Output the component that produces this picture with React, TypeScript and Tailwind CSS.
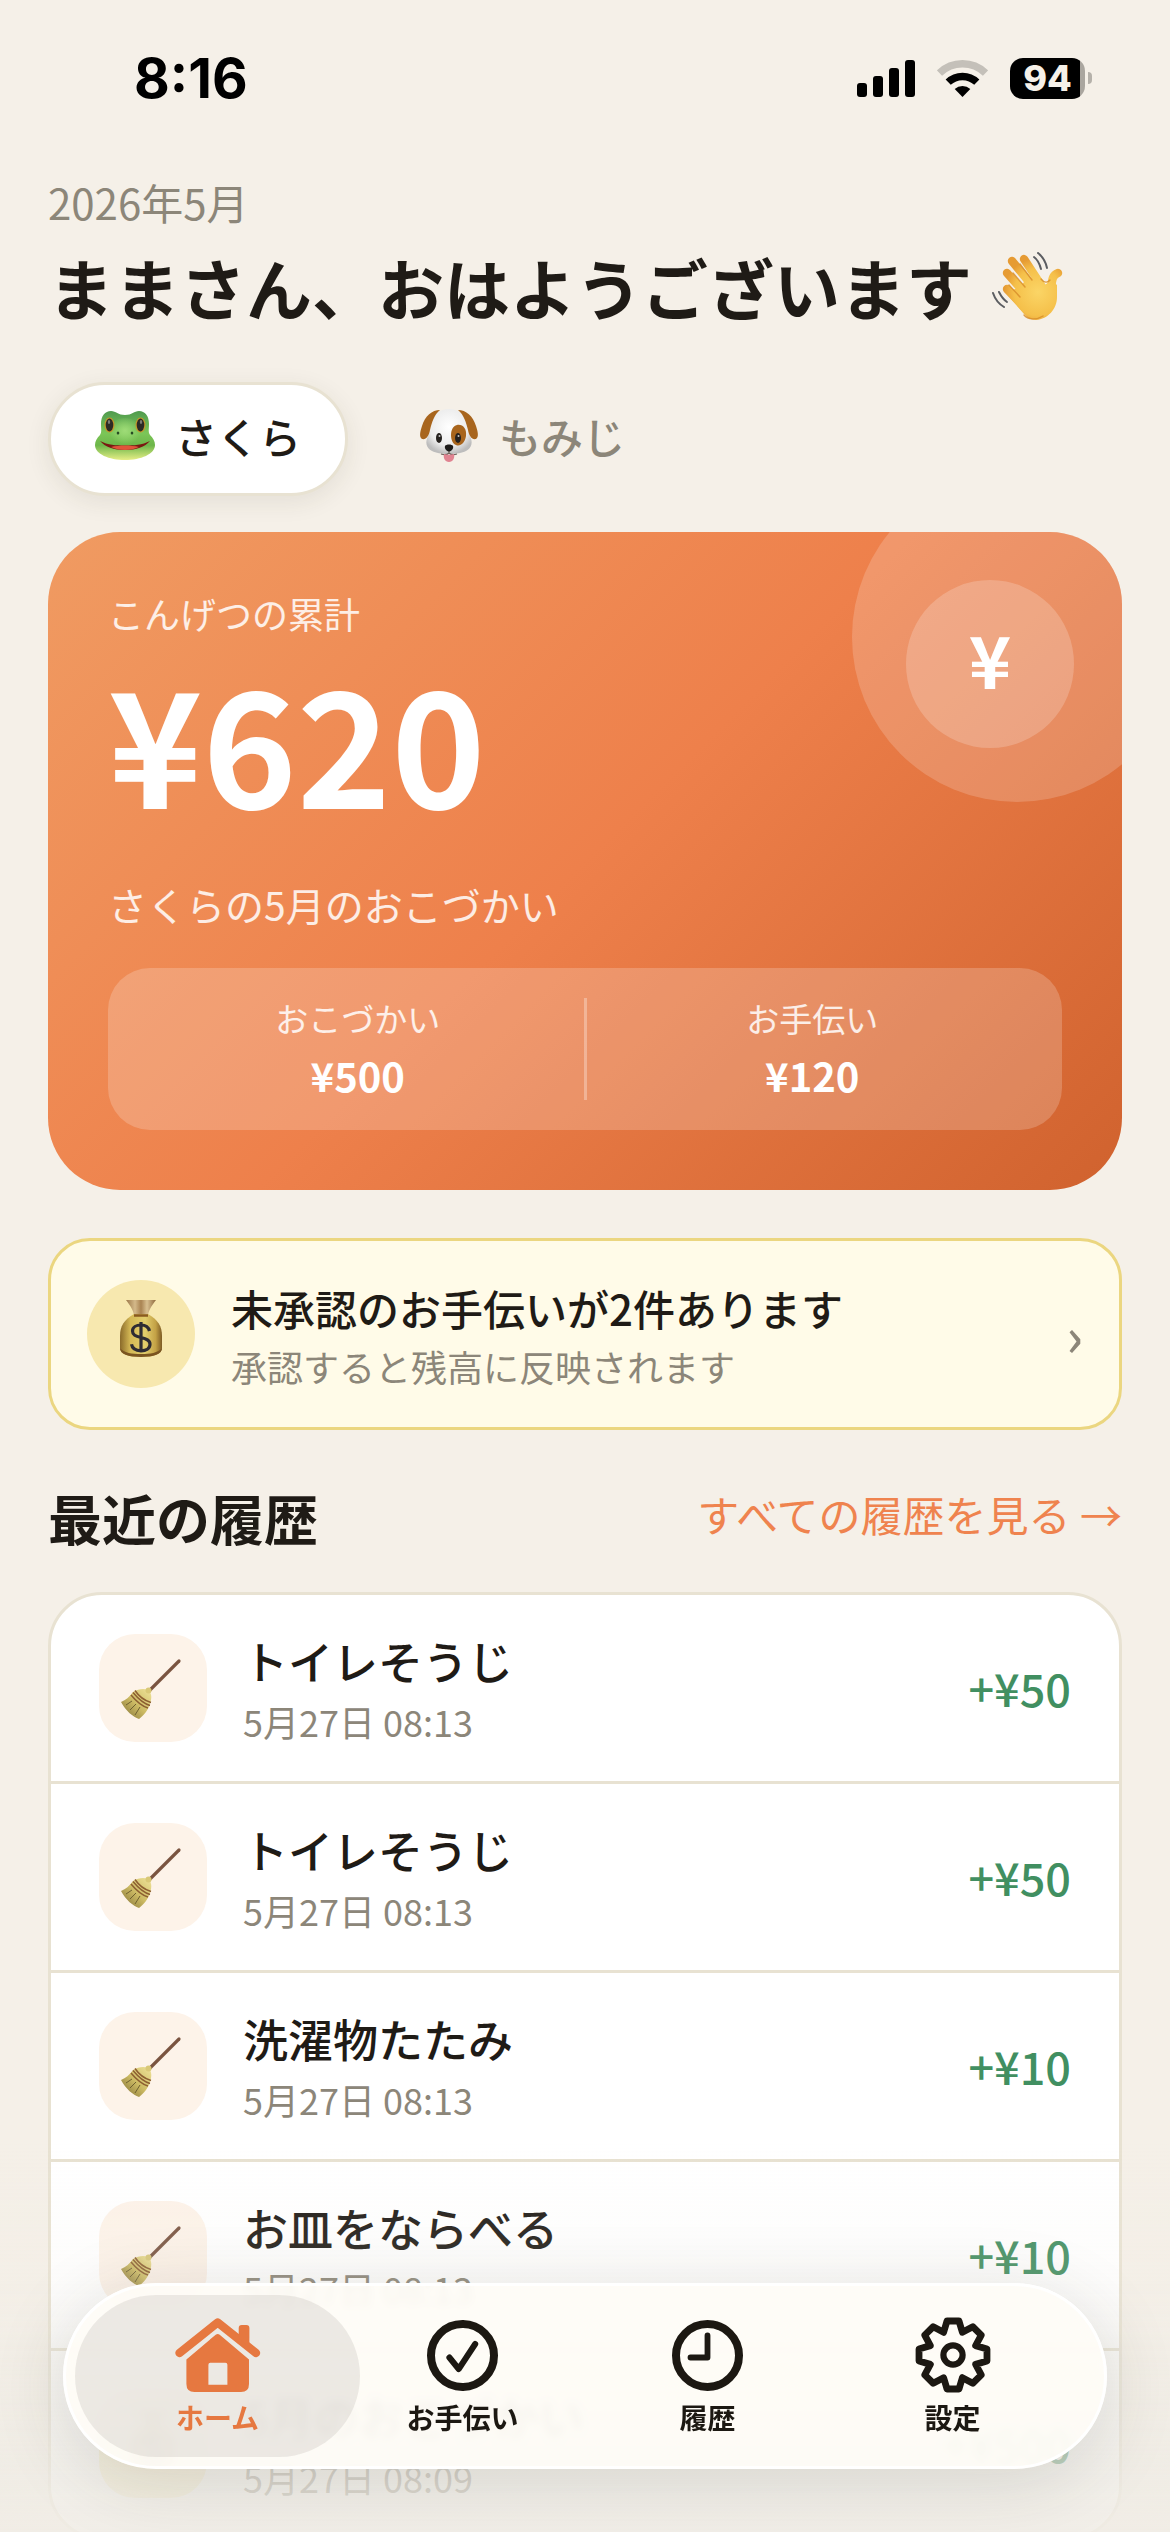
import { useState } from "react";
import type { ReactNode } from "react";

function FrogIcon() {
  return (
    <svg viewBox="0 0 60 50" className="h-[50px] w-[60px]" aria-hidden="true">
      <defs>
        <linearGradient id="frogSkin" x1="0" y1="0" x2="0" y2="1">
          <stop offset="0" stopColor="#4f9a4e" />
          <stop offset="0.45" stopColor="#7cc658" />
          <stop offset="0.7" stopColor="#6db64a" />
          <stop offset="1" stopColor="#e6ee86" />
        </linearGradient>
        <radialGradient id="frogFace" cx="0.5" cy="0.45" r="0.5">
          <stop offset="0" stopColor="#9fdc78" />
          <stop offset="1" stopColor="#9fdc78" stopOpacity="0" />
        </radialGradient>
      </defs>
      <path
        d="M6 14C6 6 10 1 16 1c5 0 7 4 14 4s9-4 14-4c6 0 10 5 10 13 0 5-1 8 1 11 3 3 5 6 5 10 0 9-14 15-30 15S0 44 0 35c0-4 2-7 5-10 2-3 1-6 1-11z"
        fill="url(#frogSkin)"
      />
      <ellipse cx="30" cy="22" rx="16" ry="14" fill="url(#frogFace)" />
      <ellipse cx="14.500" cy="15" rx="5" ry="7.500" fill="#c9992a" />
      <ellipse cx="45.500" cy="15" rx="5" ry="7.500" fill="#c9992a" />
      <ellipse cx="14.500" cy="15" rx="3.800" ry="6.500" fill="#2c2b26" />
      <ellipse cx="45.500" cy="15" rx="3.800" ry="6.500" fill="#2c2b26" />
      <ellipse cx="14" cy="12" rx="1.200" ry="2" fill="#7b7b74" />
      <ellipse cx="46" cy="12" rx="1.200" ry="2" fill="#7b7b74" />
      <ellipse cx="23" cy="23" rx="1.300" ry="1.500" fill="#274a24" />
      <ellipse cx="37" cy="23" rx="1.300" ry="1.500" fill="#274a24" />
      <path d="M5 31c8 4 16 4.500 25 4.500S47 35 55 31c-5 6-14 9-25 9S10 37 5 31z" fill="#7a1712" />
      <path d="M16 37c8-2 20-2 28 0-8 4-20 4-28 0z" fill="#e0543a" />
    </svg>
  );
}

function DogIcon() {
  return (
    <svg viewBox="0 0 60 54" className="h-[54px] w-[60px]" aria-hidden="true">
      <defs>
        <radialGradient id="dogFur" cx="0.5" cy="0.4" r="0.6">
          <stop offset="0" stopColor="#ffffff" />
          <stop offset="0.7" stopColor="#ececec" />
          <stop offset="1" stopColor="#bdbdbd" />
        </radialGradient>
      </defs>
      <path
        d="M30 1c9 0 15 5 17 13 1 6 1 9 4 14 3 6 2 12-4 15-4 2-9 3-17 3s-13-1-17-3c-6-3-7-9-4-15 3-5 3-8 4-14C15 6 21 1 30 1z"
        fill="url(#dogFur)"
      />
      <path d="M21 2C13 2 6 8 3 18c-2 6-3 11 0 13 4 1 7-3 8-9 2-8 4-15 10-20z" fill="#a8651d" />
      <path d="M39 2c8 0 15 6 18 16 2 6 3 11 0 13-4 1-7-3-8-9C47 14 45 7 39 2z" fill="#a8651d" />
      <path d="M38 17c6-1 10 4 9 11-1 7-6 11-10 9-3-1-5-5-5-10s2-9 6-10z" fill="#a8651d" />
      <ellipse cx="20" cy="30" rx="3" ry="5" fill="#26221f" />
      <ellipse cx="39" cy="30" rx="3" ry="5" fill="#26221f" />
      <circle cx="20.500" cy="28" r="1" fill="#c8c8c8" />
      <circle cx="39.500" cy="28" r="1" fill="#c8c8c8" />
      <path d="M26 38c1-2 7-2 8 0 1 3-2 5-4 6-2-1-5-3-4-6z" fill="#1c1a19" />
      <path d="M30 43v3M22 46c3 1 6 1 8-1 2 2 5 2 8 1" stroke="#6b625c" strokeWidth="1.200" fill="none" />
      <path d="M25 46c3 1 7 1 10 0 1 4-1 8-5 8s-6-4-5-8z" fill="#e08391" />
    </svg>
  );
}

function WaveIcon() {
  return (
    <svg viewBox="0 0 71 68" className="h-[68px] w-[71px]" aria-hidden="true">
      <defs>
        <radialGradient id="handSkin" gradientUnits="userSpaceOnUse" cx="46" cy="40" r="34">
          <stop offset="0" stopColor="#fbd566" />
          <stop offset="0.7" stopColor="#f5c04a" />
          <stop offset="1" stopColor="#e69b33" />
        </radialGradient>
      </defs>
      <g stroke="url(#handSkin)" strokeWidth="8.400" strokeLinecap="round" fill="none">
        <path d="M15 37l17 18" />
        <path d="M15 21l22 25" />
        <path d="M20 9l23 28" />
        <path d="M32 7l17 26" />
        <path d="M66 21c-6 2-6 8-7 16" />
      </g>
      <path
        d="M14 41l14-6 8-10 14 6c3 3 6 1 8-4l7 6v12c0 12-9 22-21 23-6 0-9-3-12-6z"
        fill="url(#handSkin)"
      />
      <g stroke="#d98f2c" strokeWidth="1.400" strokeLinecap="round" fill="none" opacity="0.85">
        <path d="M17 33l11 12" />
        <path d="M21 21l12 14" />
        <path d="M28 12l12 16" />
        <path d="M49 27c3 4 7 4 9 1" />
        <path d="M32 63c4 5 13 5 19 1" />
      </g>
      <g stroke="#5b5d61" strokeWidth="2" strokeLinecap="round" fill="none">
        <path d="M46 1c5 4 8 10 9 15" />
        <path d="M42 5c4 3 6 8 7 12" />
        <path d="M1 41c2 6 6 11 11 14" />
        <path d="M7 40c2 4 5 8 8 10" />
      </g>
    </svg>
  );
}

function BagIcon({ className }: { className: string }) {
  return (
    <svg viewBox="0 0 44 57" className={className} aria-hidden="true">
      <defs>
        <linearGradient id="bagCloth" x1="0" y1="0" x2="1" y2="0">
          <stop offset="0" stopColor="#8a6a2a" />
          <stop offset="0.25" stopColor="#d5b955" />
          <stop offset="0.6" stopColor="#e2cd6c" />
          <stop offset="0.85" stopColor="#c3a145" />
          <stop offset="1" stopColor="#7d5b24" />
        </linearGradient>
        <linearGradient id="bagNeck" x1="0" y1="0" x2="1" y2="0">
          <stop offset="0" stopColor="#9b7747" />
          <stop offset="0.3" stopColor="#d4b98a" />
          <stop offset="0.5" stopColor="#a98352" />
          <stop offset="0.7" stopColor="#d9c091" />
          <stop offset="1" stopColor="#8d683b" />
        </linearGradient>
      </defs>
      <path d="M7 0h30c-3 4-7 9-8 15H15C14 9 10 4 7 0z" fill="url(#bagNeck)" />
      <path d="M15 14h14c10 6 14 12 14 22v12c0 6-8 9-21 9S1 54 1 48V36c0-10 4-16 14-22z" fill="url(#bagCloth)" />
      <path d="M1 48c0 6 8 9 21 9s21-3 21-9c-4 5-12 6-21 6S5 53 1 48z" fill="#7b5420" />
      <path d="M15 15.500h14" stroke="#8a5a20" strokeWidth="2.500" />
      <path
        d="M30.500 31c-1-4-4-6-8.500-6s-8.500 2-8.500 6 3 5.300 8.500 6.500 9 2.500 9 6.800-4 6.500-9 6.500-8.800-2.300-9.500-6.500M22 22v30"
        stroke="#2e2b33"
        strokeWidth="3.200"
        fill="none"
      />
    </svg>
  );
}

function BroomIcon() {
  return (
    <svg viewBox="0 0 61 61" className="h-[61px] w-[61px]" aria-hidden="true">
      <defs>
        <linearGradient id="straw" x1="1" y1="0" x2="0" y2="1">
          <stop offset="0" stopColor="#efe39a" />
          <stop offset="0.5" stopColor="#cdbb64" />
          <stop offset="1" stopColor="#7d6c33" />
        </linearGradient>
      </defs>
      <path d="M28 33L58 3" stroke="#7a5440" strokeWidth="3.200" strokeLinecap="round" />
      <path d="M12 34c5-3 11-4 15-2 4 3 4 8 2 14-2 6-5 10-11 15C12 59 5 53 0 44c5-2 8-5 12-10z" fill="url(#straw)" />
      <circle cx="27.500" cy="32.500" r="3" fill="#d9c877" />
      <path d="M10 37c5 6 10 11 17 13M12 34.500c5 6 10 11 17 13M14 32.500c4 6 9 10 16 12" stroke="#8d5f31" strokeWidth="1.500" fill="none" />
      <path d="M5 47l6-4M9 52l6-6M14 57l5-8" stroke="#6f6030" strokeWidth="1" />
    </svg>
  );
}

function SignalIcon() {
  return (
    <svg viewBox="0 0 58 37" className="h-[37px] w-[58px]" aria-hidden="true">
      <rect x="0" y="23" width="10" height="14" rx="3" />
      <rect x="16" y="16" width="10" height="21" rx="3" />
      <rect x="32" y="8" width="10" height="29" rx="3" />
      <rect x="48" y="0" width="10" height="37" rx="3" />
    </svg>
  );
}

function WifiIcon() {
  return (
    <svg viewBox="0 0 51 37" className="h-[37px] w-[51px]" fill="none" aria-hidden="true">
      <path d="M2.500 13a33.200 33.200 0 0 1 46 0" stroke="#c4c0b9" strokeWidth="7.400" />
      <path d="M11.200 22.200a20.600 20.600 0 0 1 28.600 0" stroke="#000" strokeWidth="7.400" />
      <path d="M25.500 37l-7.800-8a12 12 0 0 1 15.600 0z" fill="#000" />
    </svg>
  );
}

function HomeIcon() {
  return (
    <svg viewBox="0 0 86 75" className="h-[75px] w-[86px]" aria-hidden="true">
      <path
        d="M4.500 35L42.700 4.500 81 35"
        fill="none"
        stroke="currentColor"
        strokeWidth="8.400"
        strokeLinecap="round"
        strokeLinejoin="round"
      />
      <path d="M63.700 20V10q0-3 3-3h4.700q3 0 3 3v20z" fill="currentColor" />
      <path
        fillRule="evenodd"
        d="M40.700 16.700q2-1.600 4 0L74 41.500V66q0 8-8 8H19.400q-8 0-8-8V41.500zM35.400 44.700q-2 0-2 2v20h19v-20q0-2-2-2z"
        fill="currentColor"
      />
    </svg>
  );
}

function CheckIcon() {
  return (
    <svg viewBox="0 0 71 71" className="h-[71px] w-[71px]" fill="none" stroke="currentColor" aria-hidden="true">
      <circle cx="35.500" cy="35.500" r="31.500" strokeWidth="8" />
      <path d="M22.400 37.500l9.300 11.500 16.500-25" strokeWidth="6" strokeLinecap="round" strokeLinejoin="round" />
    </svg>
  );
}

function ClockIcon() {
  return (
    <svg viewBox="0 0 71 71" className="h-[71px] w-[71px]" fill="none" stroke="currentColor" aria-hidden="true">
      <circle cx="35.500" cy="35.500" r="31.500" strokeWidth="8" />
      <path d="M35.500 15.500v22H18.500" strokeWidth="5.800" strokeLinecap="round" strokeLinejoin="round" />
    </svg>
  );
}

const gearPoints = Array.from({ length: 8 }, (_, tooth) => {
  const at = (degrees: number, radius: number) => {
    const angle = ((tooth * 45 + degrees) * Math.PI) / 180;
    return `${(Math.sin(angle) * radius).toFixed(2)},${(-Math.cos(angle) * radius).toFixed(2)}`;
  };
  return [at(-10, 34.5), at(10, 34.5), at(22.5, 24.5)].join(" ");
}).join(" ");

function GearIcon() {
  return (
    <svg
      viewBox="-38 -38 76 76"
      className="h-[76px] w-[76px]"
      fill="none"
      stroke="currentColor"
      strokeLinejoin="round"
      aria-hidden="true"
    >
      <polygon points={gearPoints} strokeWidth="6.800" />
      <circle r="9.600" strokeWidth="6.200" />
    </svg>
  );
}

function StatusBar() {
  return (
    <div className="flex h-[156px] items-center justify-between pr-[78px] pl-[134px]">
      <span className="font-[Inter,sans-serif] text-[55px] leading-none font-bold text-black">8:16</span>
      <div className="flex items-center">
        <SignalIcon />
        <div className="ml-[22px]">
          <WifiIcon />
        </div>
        <div className="ml-[22px] flex h-[41px] w-[75px] items-center justify-center rounded-[13px] bg-linear-to-r from-black from-[94%] to-[#aaa69f] to-[94%] font-[Inter,sans-serif] text-[36px] leading-none font-extrabold text-[#f5f0e8]">
          94
        </div>
        <div className="ml-[3px] h-3 w-1 rounded-r-full bg-[#b5b1aa]" />
      </div>
    </div>
  );
}

interface Child {
  name: string;
  icon: ReactNode;
}

const children: Child[] = [
  { name: "さくら", icon: <FrogIcon /> },
  { name: "もみじ", icon: <DogIcon /> },
];

function ChildTabs() {
  const [selected, setSelected] = useState("さくら");
  return (
    <div className="mt-12 flex gap-6">
      {children.map((child) => (
        <button
          key={child.name}
          type="button"
          aria-pressed={selected === child.name}
          onClick={() => setSelected(child.name)}
          className={
            selected === child.name
              ? "flex h-[114px] items-center gap-5 rounded-full border-3 border-[#e8e2d2] bg-white px-11 pb-2 text-[42px] font-medium text-[#1f1b16] shadow-[0_6px_24px_rgba(60,50,30,0.09)]"
              : "flex h-[114px] items-center gap-5 rounded-full border-3 border-transparent px-11 pb-2 text-[42px] font-medium text-[#8c8679]"
          }
        >
          {child.icon}
          {child.name}
        </button>
      ))}
    </div>
  );
}

function SummaryCard() {
  return (
    <section className="relative mt-9 overflow-hidden rounded-[72px] bg-[linear-gradient(135deg,#f09b62_0%,#ee804b_50%,#d0622e_100%)] px-15 pt-[54px] pb-15 text-white">
      <div className="absolute -top-15 -right-15 size-[330px] rounded-full bg-white/18" />
      <div className="absolute top-12 right-12 flex size-[168px] items-center justify-center rounded-full bg-white/20 pb-3 text-[72px] leading-none font-bold">
        ¥
      </div>
      <p className="text-[36px] leading-[54px] text-white/85">こんげつの累計</p>
      <p className="mt-3 text-[160px] leading-[174px] font-bold">¥620</p>
      <p className="mt-12 text-[39px] leading-[60px] text-white/85">さくらの5月のおこづかい</p>
      <dl className="mt-[34px] flex rounded-[42px] bg-white/20 px-6 py-[30px] text-center">
        <div className="flex-1">
          <dt className="text-[33px] leading-[40px] text-white/85">おこづかい</dt>
          <dd className="mt-3 text-[40px] leading-[50px] font-bold">¥500</dd>
        </div>
        <div className="flex-1 border-l-3 border-white/30">
          <dt className="text-[33px] leading-[40px] text-white/85">お手伝い</dt>
          <dd className="mt-3 text-[40px] leading-[50px] font-bold">¥120</dd>
        </div>
      </dl>
    </section>
  );
}

function PendingNotice() {
  return (
    <button
      type="button"
      className="mt-12 flex h-48 w-full items-center gap-9 rounded-[42px] border-3 border-[#ebd680] bg-[#fffbe8] px-9 text-left"
    >
      <span className="flex size-27 shrink-0 items-center justify-center rounded-full bg-[#f7e8af] pb-3">
        <BagIcon className="h-[57px] w-[44px]" />
      </span>
      <span className="flex-1 pt-1">
        <span className="block text-[42px] leading-[60px] font-medium text-[#1f1b16]">
          未承認のお手伝いが2件あります
        </span>
        <span className="block text-[36px] leading-[56px] text-[#8c8679]">承認すると残高に反映されます</span>
      </span>
      <span className="text-[54px] leading-[60px] font-medium text-[#8c8679]">›</span>
    </button>
  );
}

interface Entry {
  title: string;
  time: string;
  amount: string;
  allowance?: boolean;
}

const entries: Entry[] = [
  { title: "トイレそうじ", time: "5月27日 08:13", amount: "+¥50" },
  { title: "トイレそうじ", time: "5月27日 08:13", amount: "+¥50" },
  { title: "洗濯物たたみ", time: "5月27日 08:13", amount: "+¥10" },
  { title: "お皿をならべる", time: "5月27日 08:13", amount: "+¥10" },
  { title: "5月のおこづかい", time: "5月27日 08:09", amount: "+¥500", allowance: true },
];

function History() {
  return (
    <section>
      <div className="mt-12 flex items-center justify-between">
        <h2 className="text-[54px] leading-[80px] font-bold text-[#1f1b16]">最近の履歴</h2>
        <a href="#history" className="pb-2 text-[42px] leading-[60px] text-[#ef834e]">
          すべての履歴を見る →
        </a>
      </div>
      <ul className="mt-[34px] divide-y-3 divide-[#e8e2d2] overflow-hidden rounded-[54px] border-3 border-[#e8e2d2] bg-white">
        {entries.map((entry, index) => (
          <li key={index} className="flex h-[189px] items-center gap-9 px-12 last:h-[186px]">
            <span
              className={
                entry.allowance
                  ? "flex size-27 items-center justify-center rounded-[36px] bg-[#f9f0c9] pb-3"
                  : "flex size-27 items-center justify-center rounded-[36px] bg-[#fdf3e9] pr-1"
              }
            >
              {entry.allowance ? <BagIcon className="h-[57px] w-[44px]" /> : <BroomIcon />}
            </span>
            <div className="flex-1 pt-1">
              <p className="text-[45px] leading-[62px] font-medium text-[#1f1b16]">{entry.title}</p>
              <p className="text-[36px] leading-[58px] text-[#8c8679]">{entry.time}</p>
            </div>
            <span className="text-[45px] leading-[60px] font-medium text-[#418f61]">{entry.amount}</span>
          </li>
        ))}
      </ul>
    </section>
  );
}

const tabs = [
  { label: "ホーム", icon: <HomeIcon />, href: "#home", current: true },
  { label: "お手伝い", icon: <CheckIcon />, href: "#chores", current: false },
  { label: "履歴", icon: <ClockIcon />, href: "#history", current: false },
  { label: "設定", icon: <GearIcon />, href: "#settings", current: false },
];

function TabBar() {
  return (
    <nav className="fixed inset-x-[63px] bottom-[63px] flex h-[186px] rounded-full border-3 border-white bg-[#fefcf6]/92 px-[29px] py-[9px] shadow-[0_12px_72px_rgba(50,45,35,0.15)] backdrop-blur-[4px]">
      {tabs.map((tab) => (
        <a
          key={tab.label}
          href={tab.href}
          aria-current={tab.current ? "page" : undefined}
          className={
            tab.current
              ? "relative flex flex-1 flex-col items-center pt-5 text-[#e67840]"
              : "relative flex flex-1 flex-col items-center pt-5 text-[#1c1812]"
          }
        >
          {tab.current && <span className="absolute inset-y-0 -right-5 -left-5 rounded-full bg-[#5a554b]/11" />}
          <span className="relative flex h-[80px] items-center">{tab.icon}</span>
          <span className="relative mt-1 text-[28px] leading-[36px] font-bold">{tab.label}</span>
        </a>
      ))}
    </nav>
  );
}

export default function App() {
  return (
    <div className="h-dvh overflow-y-auto bg-[#f5f0e8] font-['Noto_Sans_CJK_JP',sans-serif] [scrollbar-width:none]">
      <StatusBar />
      <main className="px-12 pt-4">
        <p className="text-[42px] leading-[60px] text-[#8c8679]">2026年5月</p>
        <h1 className="mt-[6px] flex items-center gap-5 text-[66px] leading-[96px] font-bold whitespace-nowrap text-[#1f1b16]">
          ままさん、おはようございます
          <WaveIcon />
        </h1>
        <ChildTabs />
        <SummaryCard />
        <PendingNotice />
        <History />
      </main>
      <div className="pointer-events-none fixed inset-x-0 bottom-0 h-[390px] bg-[linear-gradient(to_bottom,rgba(240,236,229,0)_0%,rgba(240,236,229,0.15)_37%,rgba(238,235,228,0.4)_55%,rgba(238,235,228,0.75)_85%,rgba(240,236,229,0.88)_100%)]" />
      <TabBar />
    </div>
  );
}
